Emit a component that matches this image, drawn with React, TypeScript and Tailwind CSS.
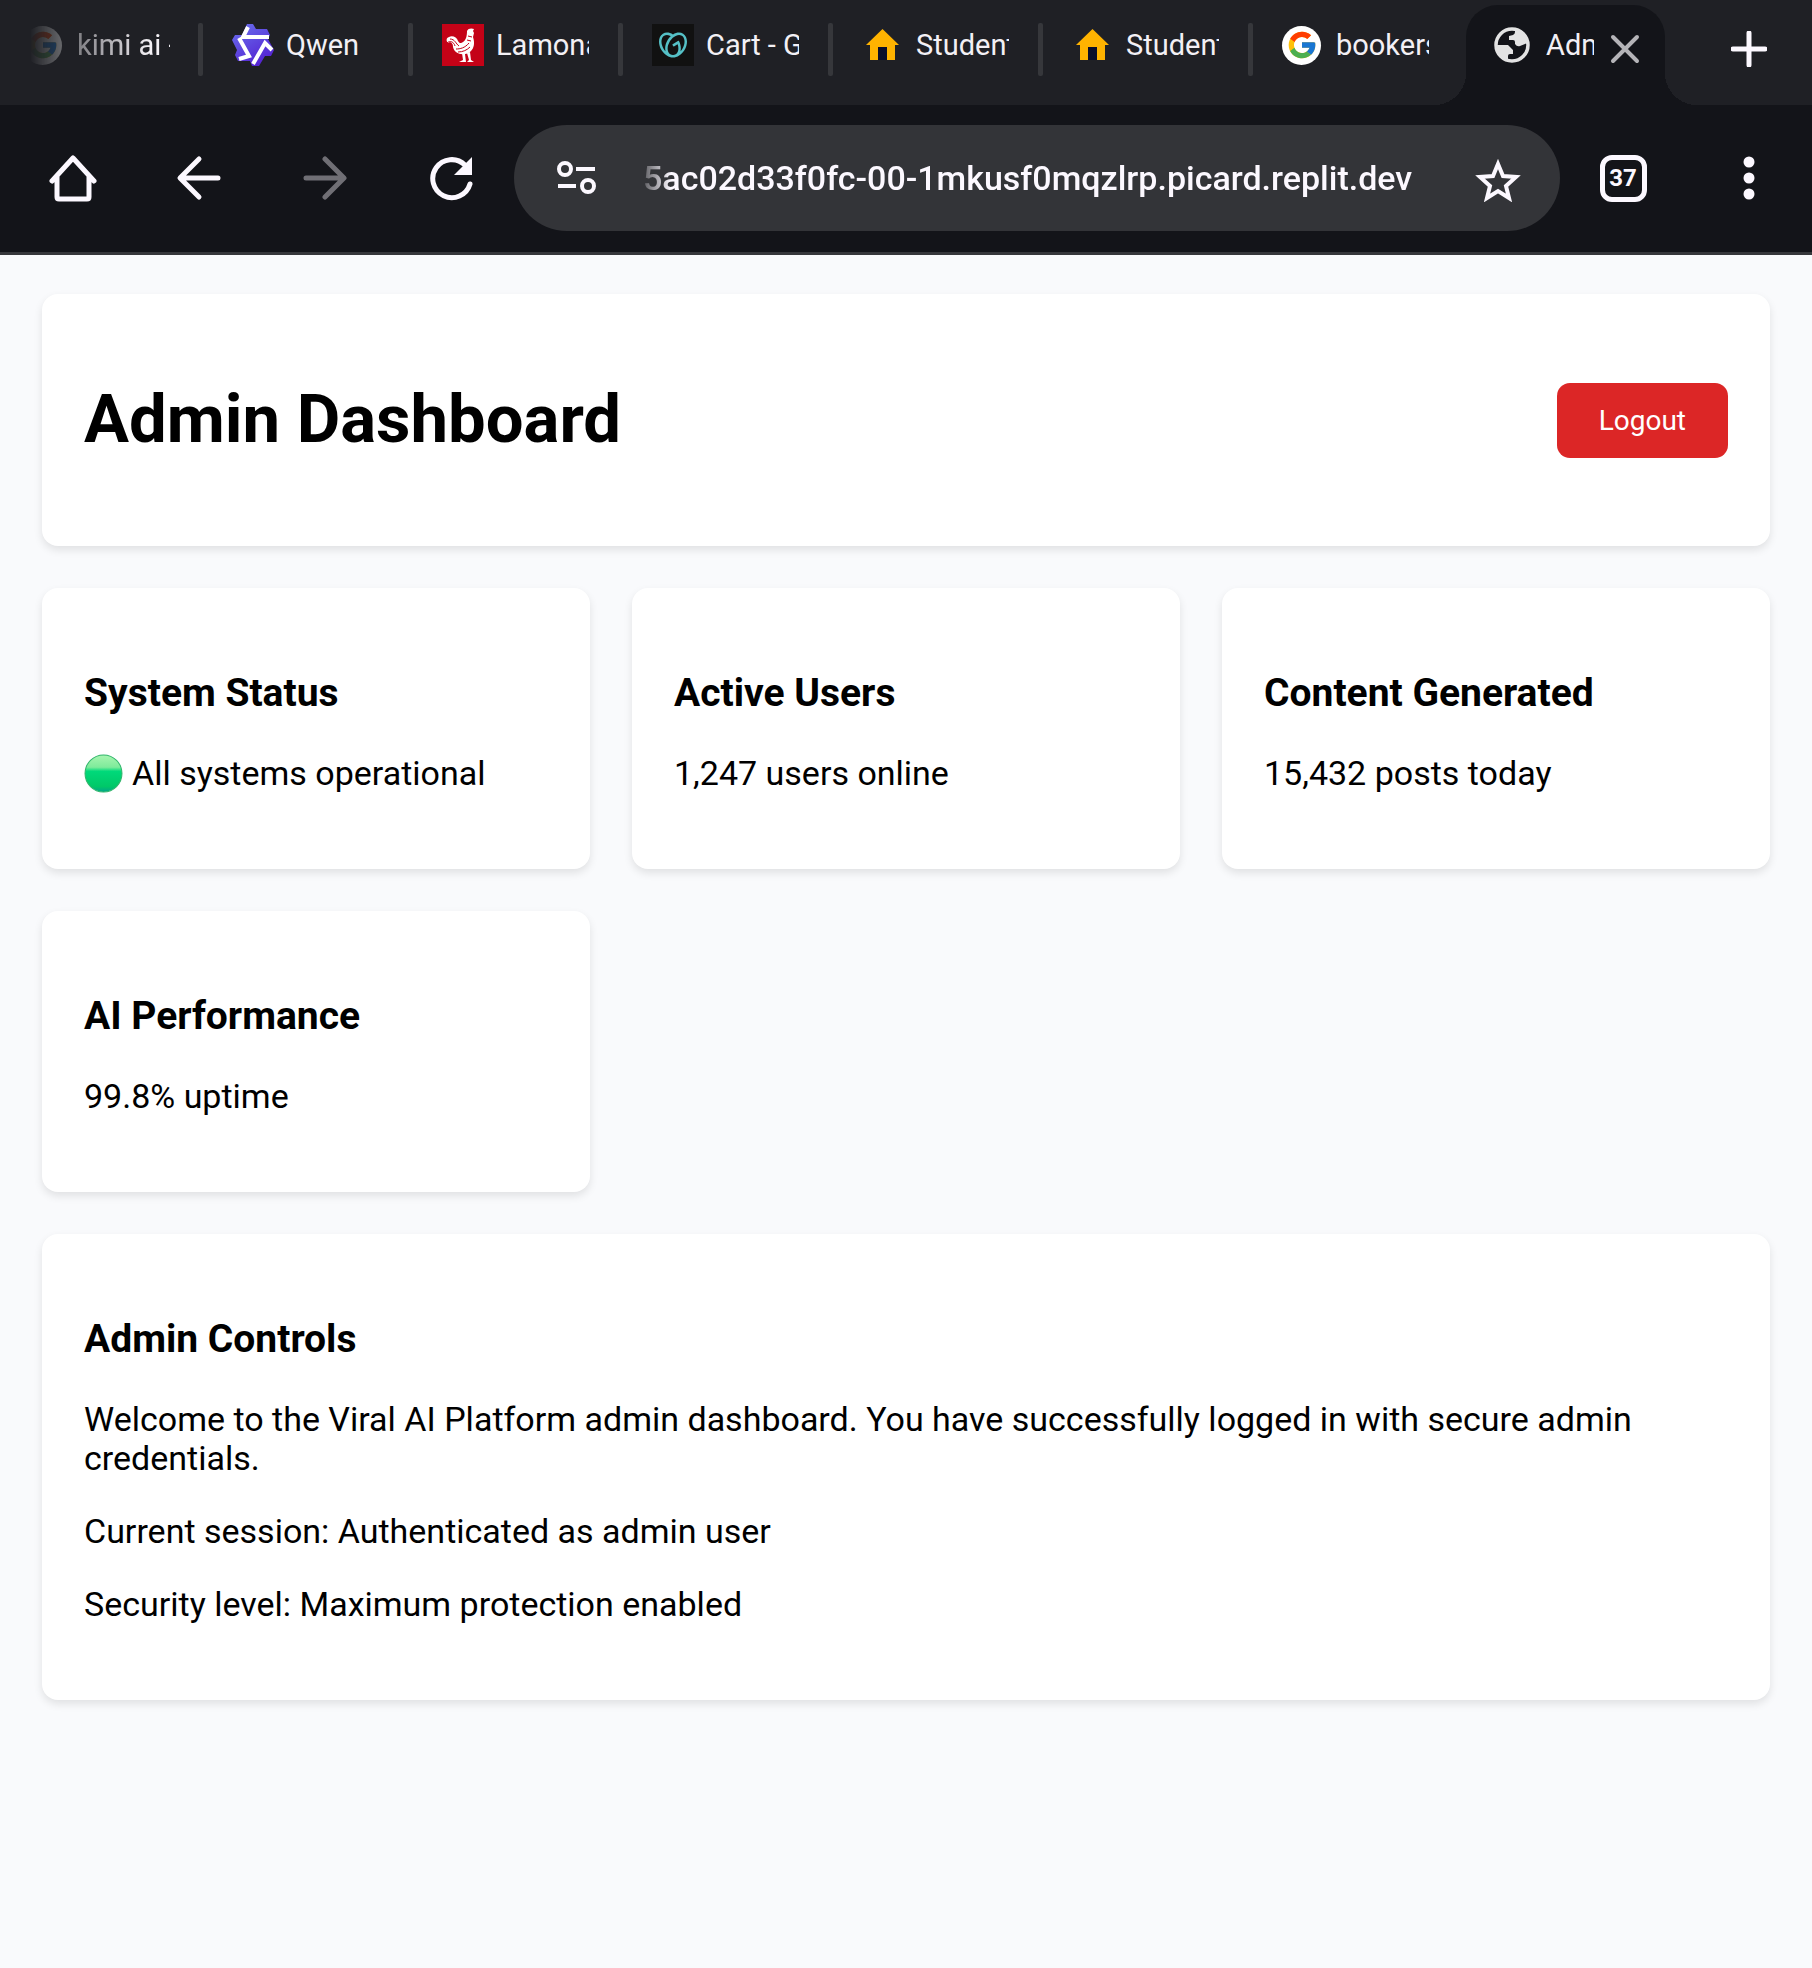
import React from "react";
import { FcGoogle } from "react-icons/fc";
import { SiGodaddy } from "react-icons/si";

function QwenIcon() {
  return (
    <svg viewBox="0 0 42 42" className="size-[42px]" aria-hidden="true">
      <defs>
        <linearGradient id="qwen" x1="0" y1="0" x2="0.6" y2="1">
          <stop offset="0" stopColor="#6a72ee" />
          <stop offset="1" stopColor="#5423d2" />
        </linearGradient>
      </defs>
      <path
        d="M15 0h6l3 5h11l3 6-2 4 6 11-3 6h-6l-6 10h-7l-2-5H6l-3-6 2-5-5-10 3-5h7z"
        fill="url(#qwen)"
      />
      <path
        d="M16 3l-5 10h26M7 14l10 18-10 3M21 40l12-21 7 7"
        fill="none"
        stroke="#fff"
        strokeWidth="4"
      />
    </svg>
  );
}

function RoosterIcon() {
  return (
    <svg viewBox="0 0 42 42" className="size-[42px] bg-[#c40217]" aria-hidden="true">
      <g fill="#fff">
        <path d="M25 7c1-3 5-3 7-2l-1 2 1 2-1 4c2 6 1 11-2 14-2 2-4 3-6 3-6 1-11-2-12-7 0-3-1-4-3-5l-2 1c-2-2-2-5 1-6 3-2 8 0 9 4 1 2 3 3 5 1 3-2 4-6 4-11z" />
        <path d="m20 29 1 7-4 2h7l-1-8zM25 29l2 7-2 2h7l-3-2-1-8z" />
      </g>
      <path
        d="M5 19c3-3 7-1 8 3M8 15c5 0 6 5 9 7M14 25c4 0 9-1 13-6M16 28c5 0 9-2 12-5M26 12l4 1M25 16l4 1"
        stroke="#c40217"
        strokeWidth="1"
        fill="none"
      />
    </svg>
  );
}

function GodaddyIcon() {
  return (
    <span className="flex size-[42px] items-center justify-center bg-[#111]">
      <SiGodaddy className="size-7 text-[#55c0c6]" />
    </span>
  );
}

function HouseIcon() {
  return (
    <svg viewBox="0 0 42 42" className="size-[42px]" aria-hidden="true">
      <path d="M20.500 5 37 21h-4v15H8V21H4z" fill="#ffb300" />
      <path d="M16 23h9v13h-9z" fill="#0a0e2a" />
    </svg>
  );
}

function GoogleIcon() {
  return (
    <span className="flex size-[42px] items-center">
      <span className="flex size-[39px] items-center justify-center rounded-full bg-white">
        <FcGoogle className="size-8" />
      </span>
    </span>
  );
}

function GlobeIcon() {
  return (
    <svg viewBox="0 0 36 36" className="size-9" aria-hidden="true">
      <circle cx="18" cy="18" r="16" fill="none" stroke="#e3e3e3" strokeWidth="3.500" />
      <path
        d="M21 2v3q0 2-2 3l-4 1v4h4q2 0 2 2v2q2 3 5 2l5-2 2-1C33 10 28 4 21 2zM3 18h11l5 5v4h-3q-2 0-2 2v4C7 31 3 26 3 18z"
        fill="#e3e3e3"
      />
    </svg>
  );
}

const tabs = [
  { label: "kimi ai -", icon: <GoogleIcon />, faded: true },
  { label: "Qwen", icon: <QwenIcon /> },
  { label: "Lamona", icon: <RoosterIcon /> },
  { label: "Cart - G", icon: <GodaddyIcon /> },
  { label: "Student", icon: <HouseIcon /> },
  { label: "Student", icon: <HouseIcon /> },
  { label: "bookers", icon: <GoogleIcon />, last: true },
];

function TabStrip() {
  return (
    <nav aria-label="Tabs" className="flex h-[105px] bg-[#1f2025] text-[29px] leading-9 text-[#f3f0f5]">
      {tabs.map((t, i) => (
        <div key={i} className={i === 0 ? "flex w-[203px] shrink-0" : "flex w-[210px] shrink-0"}>
          <button
            className={
              t.faded
                ? "flex h-[90px] min-w-0 flex-1 items-center gap-3 pl-[23px] [mask-image:linear-gradient(to_right,transparent_30px,rgba(0,0,0,0.4)_70px,black_150px)]"
                : "flex h-[90px] min-w-0 flex-1 items-center gap-3 pl-[29px]"
            }
          >
            {t.icon}
            <span className="w-[93px] overflow-hidden text-left whitespace-nowrap">{t.label}</span>
          </button>
          {!t.last && <span className="mt-[23px] h-[53px] w-[5px] rounded-xs bg-[#36373b]" />}
        </div>
      ))}
      <div className="relative mt-[5px] ml-[3px] flex w-[199px] shrink-0 items-start rounded-t-[32px] bg-[#131419] pl-7">
        <span className="absolute bottom-0 -left-8 size-8 bg-[radial-gradient(circle_at_top_left,transparent_32px,#131419_32px)]" />
        <span className="absolute -right-8 bottom-0 size-8 bg-[radial-gradient(circle_at_top_right,transparent_32px,#131419_32px)]" />
        <button className="flex h-20 items-center gap-4">
          <GlobeIcon />
          <span className="w-12 overflow-hidden text-left whitespace-nowrap">Admin</span>
        </button>
        <button aria-label="Close tab" className="ml-4 flex h-[88px] items-center">
          <svg viewBox="0 0 30 30" className="size-[30px]" aria-hidden="true">
            <path d="m3 3 24 24M27 3 3 27" stroke="#b5b4b8" strokeWidth="4" strokeLinecap="round" />
          </svg>
        </button>
      </div>
      <button aria-label="New tab" className="flex h-[98px] flex-1 items-center justify-center pl-5">
        <svg viewBox="0 0 36 36" className="size-9" aria-hidden="true">
          <path d="M18 2v32M2 18h32" stroke="#fcf8ff" strokeWidth="5" strokeLinecap="round" />
        </svg>
      </button>
    </nav>
  );
}

function ToolButton({ label, children }: { label: string; children: React.ReactNode }) {
  return (
    <button aria-label={label} className="flex h-[106px] w-[126px] shrink-0 items-center justify-center text-[#fcf8ff]">
      <svg viewBox="0 0 48 48" className="size-12" fill="none" stroke="currentColor" strokeWidth="5" aria-hidden="true">
        {children}
      </svg>
    </button>
  );
}

function Toolbar() {
  return (
    <div className="flex items-center border-b-[3px] border-[#36373b] bg-[#131419] pt-5 pb-[21px] pl-[10px]">
      <ToolButton label="Home">
        <path d="M3 27 24 4l21 23M8 23v20q0 2 2 2h28q2 0 2-2V23" strokeLinecap="round" strokeLinejoin="round" />
      </ToolButton>
      <ToolButton label="Back">
        <path d="M43 24H6M24 5 5 24l19 19" strokeLinecap="round" strokeLinejoin="round" />
      </ToolButton>
      <span className="opacity-40">
        <ToolButton label="Forward">
          <path d="M5 24h37M24 5l19 19-19 19" strokeLinecap="round" strokeLinejoin="round" />
        </ToolButton>
      </span>
      <ToolButton label="Reload">
        <path d="M43 30A19 19 0 1 1 38 11" strokeLinecap="round" />
        <path d="M45 3v18H27z" fill="currentColor" stroke="none" />
      </ToolButton>
      <div className="flex h-[106px] flex-1 items-center rounded-full bg-[#333438] pl-[41px]">
        <button aria-label="Site settings" className="text-[#fcf8ff]">
          <svg viewBox="0 0 42 36" className="h-9 w-[42px]" fill="none" stroke="currentColor" strokeWidth="4" aria-hidden="true">
            <circle cx="10" cy="9" r="6" />
            <circle cx="33" cy="26" r="6" />
            <path d="M21 9h19M3 26h18" />
          </svg>
        </button>
        <input
          aria-label="Address"
          defaultValue="5ac02d33f0fc-00-1mkusf0mqzlrp.picard.replit.dev"
          className="ml-[46px] h-[60px] min-w-0 flex-1 text-[34px] font-medium text-[#fcf8ff] outline-none [mask-image:linear-gradient(to_right,rgba(0,0,0,0.2),black_28px)]"
        />
        <button aria-label="Bookmark" className="mr-[38px] ml-[58px] text-[#fcf8ff]">
          <svg viewBox="0 0 48 48" className="size-12" fill="none" stroke="currentColor" strokeWidth="4" aria-hidden="true">
            <path d="m24 10 5 12 13 1-10 9 3 12-11-7-11 7 3-12-10-9 13-1z" />
          </svg>
        </button>
      </div>
      <button aria-label="Open tabs" className="flex h-[106px] w-[126px] items-center justify-center">
        <span className="flex size-[47px] items-center justify-center rounded-xl border-[5px] border-[#fcf8ff] text-2xl font-bold text-[#fcf8ff]">
          37
        </span>
      </button>
      <ToolButton label="Menu">
        <g fill="currentColor" stroke="none">
          <circle cx="24" cy="8" r="5.500" />
          <circle cx="24" cy="24" r="5.500" />
          <circle cx="24" cy="40" r="5.500" />
        </g>
      </ToolButton>
    </div>
  );
}

function Card({ title, children }: { title: string; children: React.ReactNode }) {
  return (
    <section className="rounded-2xl bg-white p-[42px] shadow-[0_4px_8px_rgba(0,0,0,0.1)]">
      <h3 className="mt-10 mb-[38px] text-[39px] leading-[46px] font-bold">{title}</h3>
      <div className="mb-[34px] space-y-[34px]">{children}</div>
    </section>
  );
}

function GreenDot() {
  return (
    <svg viewBox="0 0 38 38" className="mr-[9px] inline-block size-[39px] align-[-8px]" role="img" aria-label="Green status">
      <defs>
        <linearGradient id="dot" x1="0" y1="0" x2="0" y2="1">
          <stop offset="0" stopColor="#a8f5b0" />
          <stop offset="0.330" stopColor="#7eeb9b" />
          <stop offset="0.440" stopColor="#00d97a" />
          <stop offset="0.850" stopColor="#00c868" />
          <stop offset="1" stopColor="#00a58a" />
        </linearGradient>
      </defs>
      <circle cx="19" cy="19" r="18" fill="url(#dot)" stroke="#2fb56a" strokeWidth="1" />
    </svg>
  );
}

export default function App() {
  return (
    <div className="flex min-h-screen flex-col bg-[#f9fafc] font-[Roboto,sans-serif] text-black">
      <TabStrip />
      <Toolbar />
      <main className="flex flex-col gap-[42px] px-[42px] pt-[39px] pb-[42px] text-[34px] leading-[39px]">
        <header className="flex items-center justify-between rounded-2xl bg-white p-[42px] shadow-[0_4px_8px_rgba(0,0,0,0.1)]">
          <h1 className="mt-11 mb-[46px] text-[67px] leading-[78px] font-bold">Admin Dashboard</h1>
          <button className="rounded-[13px] bg-[#dc2626] px-[42px] py-[21px] text-[28px] leading-[33px] text-white">
            Logout
          </button>
        </header>
        <div className="grid grid-cols-3 gap-[42px]">
          <Card title="System Status">
            <p>
              <GreenDot />
              All systems operational
            </p>
          </Card>
          <Card title="Active Users">
            <p>1,247 users online</p>
          </Card>
          <Card title="Content Generated">
            <p>15,432 posts today</p>
          </Card>
          <Card title="AI Performance">
            <p>99.8% uptime</p>
          </Card>
        </div>
        <Card title="Admin Controls">
          <p>
            Welcome to the Viral AI Platform admin dashboard. You have successfully logged in with secure admin
            credentials.
          </p>
          <p>Current session: Authenticated as admin user</p>
          <p>Security level: Maximum protection enabled</p>
        </Card>
      </main>
    </div>
  );
}
